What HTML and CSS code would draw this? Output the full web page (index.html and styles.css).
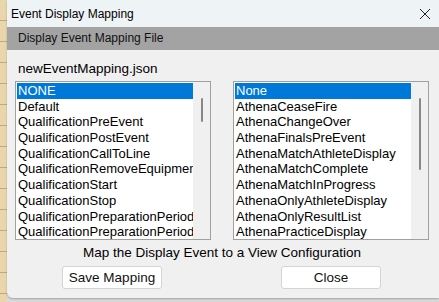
FILE: index.html
```html
<!DOCTYPE html>
<html lang="en">
<head>
<meta charset="UTF-8">
<title>Event Display Mapping</title>
<link rel="stylesheet" href="styles.css">
</head>
<body>
  <div class="desktop"></div>
  <div class="window">
    <div class="titlebar">
      <span class="title">Event Display Mapping</span>
      <svg class="close" width="12" height="12" viewBox="0 0 12 12"><path d="M1 1 L11 11 M11 1 L1 11" stroke="#222" stroke-width="1"/></svg>
    </div>
    <div class="band">Display Event Mapping File</div>
    <div class="body">
      <div class="filename">newEventMapping.json</div>
      <div class="lists">
        <div class="listbox left">
          <ul class="items">
            <li class="selected">NONE</li>
            <li>Default</li>
            <li>QualificationPreEvent</li>
            <li>QualificationPostEvent</li>
            <li>QualificationCallToLine</li>
            <li>QualificationRemoveEquipment</li>
            <li>QualificationStart</li>
            <li>QualificationStop</li>
            <li>QualificationPreparationPeriod</li>
            <li>QualificationPreparationPeriodEnd</li>
          </ul>
          <div class="scroll"><div class="thumb short"></div></div>
        </div>
        <div class="listbox right">
          <ul class="items">
            <li class="selected">None</li>
            <li>AthenaCeaseFire</li>
            <li>AthenaChangeOver</li>
            <li>AthenaFinalsPreEvent</li>
            <li>AthenaMatchAthleteDisplay</li>
            <li>AthenaMatchComplete</li>
            <li>AthenaMatchInProgress</li>
            <li>AthenaOnlyAthleteDisplay</li>
            <li>AthenaOnlyResultList</li>
            <li>AthenaPracticeDisplay</li>
          </ul>
          <div class="scroll"><div class="thumb long"></div></div>
        </div>
      </div>
      <div class="hint">Map the Display Event to a View Configuration</div>
      <div class="buttons">
        <button class="btn save">Save Mapping</button>
        <button class="btn close-btn">Close</button>
      </div>
    </div>
  </div>
</body>
</html>
```

FILE: styles.css
```css
body {
    margin: 0;
    width: 439px;
    height: 302px;
    overflow: hidden;
    display: flex;
    background: #d9d9d9;
    font-family: 'Liberation Sans', Arial, sans-serif;
    color: #000;
}
.desktop {
    width: 7px;
    flex-shrink: 0;
    background: repeating-linear-gradient(#e9d6ab 0 20px, #b9a98a 20px 21px);
}
.window {
    flex: 1;
    height: 298px;
    display: flex;
    flex-direction: column;
    background: #f0f0f0;
    border-bottom-left-radius: 6px;
    box-shadow: 0 1px 2px rgba(0, 0, 0, 0.25);
}
.titlebar {
    height: 27px;
    display: flex;
    align-items: center;
    justify-content: space-between;
    padding: 0 8px 0 4px;
    background: #eef3f6;
    font-size: 12px;
}
.close {
    margin-top: 1px;
}
.band {
    height: 23px;
    line-height: 23px;
    padding-left: 11px;
    background: #a3a3a3;
    font-size: 12px;
    color: #111;
}
.body {
    flex: 1;
    padding: 0 10px 0 8px;
    display: flex;
    flex-direction: column;
}
.filename {
    font-size: 13.5px;
    margin: 11px 0 0 3px;
    height: 20px;
}
.lists {
    display: flex;
    justify-content: space-between;
}
.listbox {
    height: 157px;
    border: 1px solid #a0a0a0;
    background: #f0f0f0;
    display: flex;
}
.listbox.left {
    width: 194px;
}
.listbox.right {
    width: 194px;
}
.items {
    list-style: none;
    margin: 0;
    padding: 1px 0 0 1px;
    flex: 1;
    background: #fff;
    overflow: hidden;
    font-size: 13px;
}
.items li {
    height: 15.7px;
    line-height: 15.7px;
    padding-left: 1px;
    white-space: nowrap;
    overflow: hidden;
}
.items li.selected {
    background: #0078d7;
    color: #fff;
}
.scroll {
    width: 17px;
    background: #f0f0f0;
    position: relative;
}
.thumb {
    width: 2px;
    background: #888;
    margin: 16px auto 0;
    border-radius: 1px;
}
.thumb.short {
    height: 24px;
}
.thumb.long {
    height: 72px;
}
.hint {
    text-align: center;
    font-size: 13.5px;
    margin-top: 5px;
    height: 17px;
}
.buttons {
    display: flex;
    justify-content: space-between;
    padding: 0 48px 0 47px;
    margin-top: 4px;
}
.btn {
    width: 100px;
    height: 23px;
    border: 1px solid #d4d4d4;
    border-radius: 3px;
    background: #fff;
    font-family: 'Liberation Sans', Arial, sans-serif;
    font-size: 13.5px;
    color: #111;
    padding: 0;
}
```
